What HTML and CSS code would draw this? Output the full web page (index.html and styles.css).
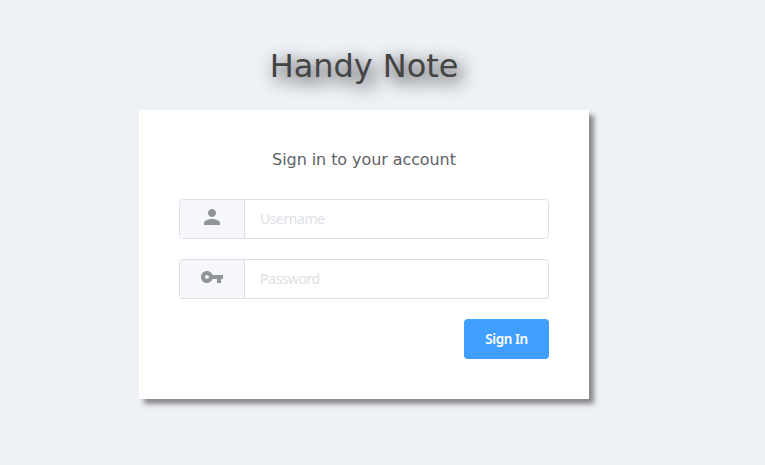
FILE: index.html
```html
<!DOCTYPE html>
<html lang="en">
<head>
<meta charset="utf-8">
<title>Handy Note</title>
<link rel="stylesheet" href="styles.css">
</head>
<body>
<main class="login">
  <h1 class="title">Handy Note</h1>
  <form class="card">
    <h2 class="subtitle">Sign in to your account</h2>
    <div class="field">
      <span class="prepend"><svg class="icon" viewBox="0 0 24 24"><path d="M12 12c2.21 0 4-1.79 4-4s-1.79-4-4-4-4 1.79-4 4 1.79 4 4 4zm0 2c-2.67 0-8 1.34-8 4v2h16v-2c0-2.66-5.33-4-8-4z"/></svg></span>
      <input class="input" type="text" placeholder="Username">
    </div>
    <div class="field">
      <span class="prepend"><svg class="icon" viewBox="0 0 24 24"><path d="M12.65 10C11.83 7.67 9.61 6 7 6c-3.31 0-6 2.69-6 6s2.69 6 6 6c2.61 0 4.83-1.67 5.65-4H17v4h4v-4h2v-4H12.65zM7 14c-1.1 0-2-.9-2-2s.9-2 2-2 2 .9 2 2-.9 2-2 2z"/></svg></span>
      <input class="input" type="password" placeholder="Password">
    </div>
    <div class="actions"><button class="button" type="button">Sign In</button></div>
  </form>
</main>
</body>
</html>
```
FILE: styles.css
```css
* { box-sizing: border-box; }
body { margin: 0; height: 465px; overflow: hidden; background: #eef1f6; font-family: "DejaVu Sans", sans-serif; }
.login { width: 450px; margin-left: 139px; padding-top: 47px; }
.title { margin: 0 0 25px; height: 38px; line-height: 38px; font-size: 32px; font-weight: 400; letter-spacing: -0.05px; text-align: center; color: #444; text-shadow: 5px 5px 18px #000; }
.card { height: 289px; padding: 40px; background: #fff; box-shadow: 5px 5px 5px #888; }
.subtitle { margin: 0 0 30px; height: 19px; line-height: 19px; font-size: 16px; font-weight: 400; letter-spacing: -0.08px; text-align: center; color: #606266; }
.field { display: flex; height: 40px; margin-bottom: 20px; border: 1px solid #dcdfe6; border-radius: 4px; overflow: hidden; background: #fff; }
.prepend { width: 65px; padding-top: 5px; background: #f5f7fa; border-right: 1px solid #dcdfe6; text-align: center; }
.icon { display: block; width: 24px; height: 24px; margin: 0 auto; fill: #909399; }
.input { flex: 1; min-width: 0; border: 0; outline: 0; padding: 0 15px 2px; background: transparent; font: 14px "Noto Sans", sans-serif; letter-spacing: -0.45px; }
.input::placeholder { color: #dcdfe6; }
.actions { display: flex; justify-content: flex-end; }
.button { width: 85px; height: 40px; padding: 0; border: 0; border-radius: 4px; background: #409eff; color: #fff; font: 600 13.5px "Noto Sans", sans-serif; letter-spacing: -0.45px; }
```
